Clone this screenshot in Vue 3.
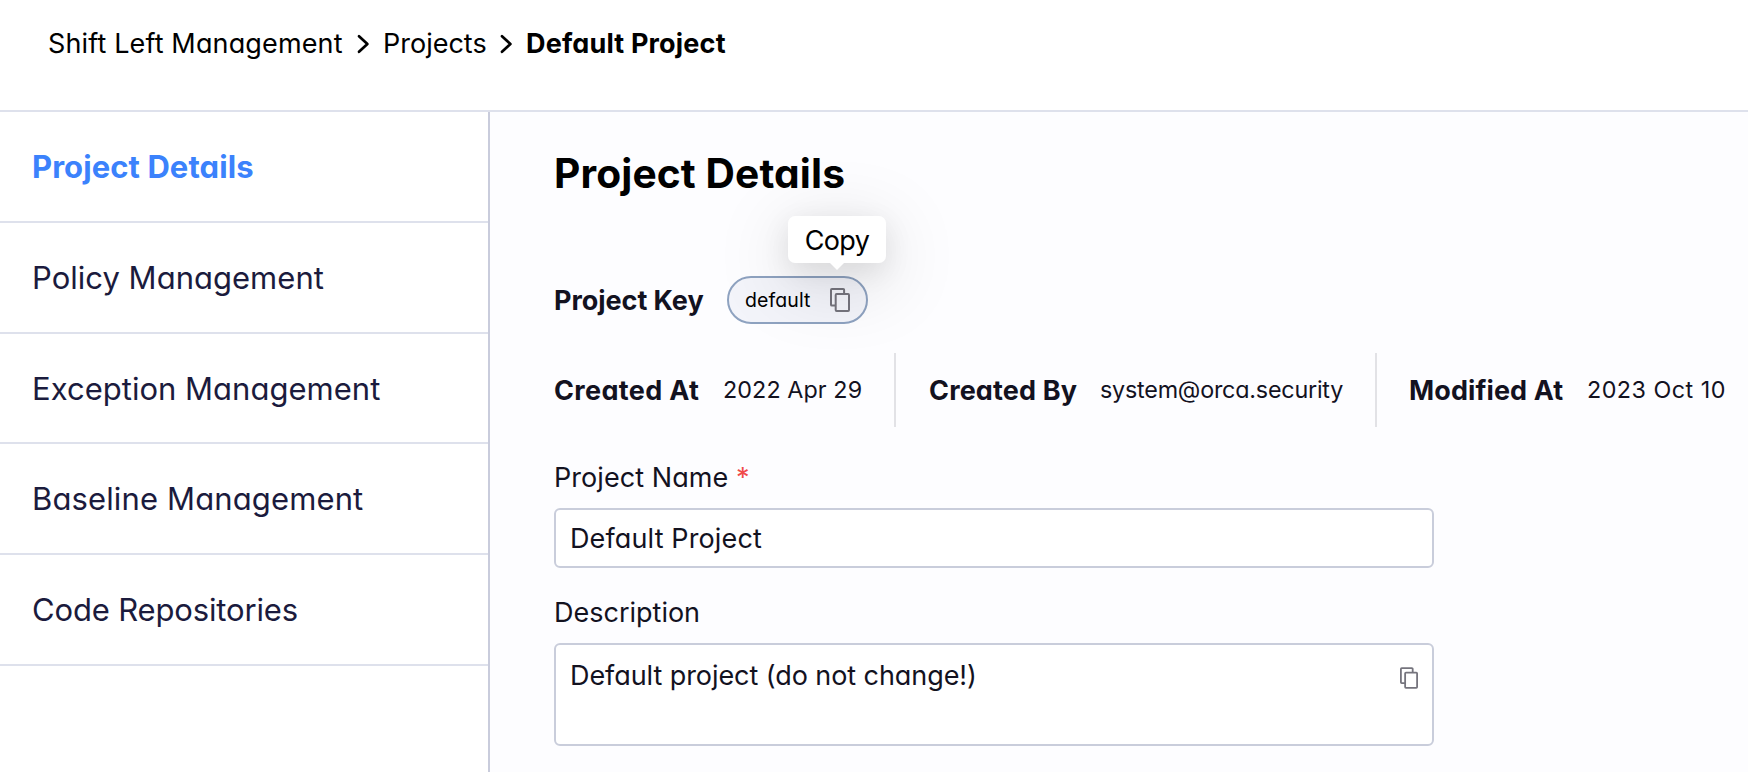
<script setup>
const navItems = [
  { label: 'Project Details', cls: 'active' },
  { label: 'Policy Management', cls: 'policy' },
  { label: 'Exception Management', cls: 'exception' },
  { label: 'Baseline Management', cls: 'baseline' },
  { label: 'Code Repositories', cls: 'code' },
]
const meta = [
  { label: 'Created At', value: '2022 Apr 29', cls: 'created-at' },
  { label: 'Created By', value: 'system@orca.security', cls: 'created-by' },
  { label: 'Modified At', value: '2023 Oct 10', cls: 'modified-at' },
]
</script>

<template>
  <div class="page">
    <header class="header">
      <nav class="crumbs">
        <span class="crumb root">Shift Left Management</span>
        <svg class="chevron" width="13" height="20" viewBox="0 0 13 20"><path d="M2 2.2 10.4 10 2 17.8" /></svg>
        <span class="crumb mid">Projects</span>
        <svg class="chevron" width="13" height="20" viewBox="0 0 13 20"><path d="M2 2.2 10.4 10 2 17.8" /></svg>
        <span class="crumb current">Default Project</span>
      </nav>
    </header>

    <div class="body">
      <aside class="sidebar">
        <a v-for="item in navItems" :key="item.label" class="nav-item" :class="item.cls">{{ item.label }}</a>
      </aside>

      <main class="main">
        <h1 class="title">Project Details</h1>

        <div class="key-row">
          <span class="label key-label">Project Key</span>
          <span class="pill">
            <span class="pill-text">default</span>
            <span class="copy-wrap">
              <svg class="copy" width="20" height="24" viewBox="0 0 20 24">
                <path d="M5.5 17.6H1.9a.9.9 0 0 1-.9-.9V1.9a.9.9 0 0 1 .9-.9H13.2a.9.9 0 0 1 .9.9V6" />
                <rect x="5.7" y="6" width="13.3" height="17" rx=".9" />
              </svg>
              <span class="tooltip">Copy</span>
            </span>
          </span>
        </div>

        <div class="meta">
          <div v-for="m in meta" :key="m.label" class="meta-cell" :class="m.cls">
            <span class="label">{{ m.label }}</span>
            <span class="value">{{ m.value }}</span>
          </div>
        </div>

        <div class="field-label name-label">Project Name <span class="required">*</span></div>
        <div class="input">Default Project</div>

        <div class="field-label desc-label">Description</div>
        <div class="textarea">
          <span class="desc-text">Default project (do not change!)</span>
          <svg class="copy" width="18" height="22" viewBox="0 0 20 24">
            <path d="M5.5 17.6H1.9a.9.9 0 0 1-.9-.9V1.9a.9.9 0 0 1 .9-.9H13.2a.9.9 0 0 1 .9.9V6" />
            <rect x="5.7" y="6" width="13.3" height="17" rx=".9" />
          </svg>
        </div>
      </main>
    </div>
  </div>
</template>

<style>
body {
  margin: 0;
  background: #fff;
}
</style>

<style scoped>
.page {
  box-sizing: border-box;
  height: 772px;
  overflow: hidden;
  display: flex;
  flex-direction: column;
  font-family: Inter, "Liberation Sans", sans-serif;
  font-feature-settings: "cv11";
  font-size: 27px;
  font-weight: 380;
  color: #13121f;
  white-space: nowrap;
}
.header {
  box-sizing: border-box;
  flex: none;
  height: 112px;
  padding: 23px 0 0 48px;
  border-bottom: 2px solid #dee1ec;
  background: #fff;
  color: #000;
}
.crumbs {
  display: flex;
  align-items: center;
  line-height: 40px;
}
.crumb { padding-top: 1px; }
.root { width: 309px; letter-spacing: 0.14px; }
.mid { width: 117px; margin-left: 13px; }
.current { margin-left: 13px; font-weight: 700; letter-spacing: 0.17px; }
.chevron {
  fill: none;
  stroke: #000;
  stroke-width: 2.7;
  stroke-linecap: round;
  stroke-linejoin: round;
}
.body {
  flex: 1;
  display: flex;
  min-height: 0;
}
.sidebar {
  box-sizing: border-box;
  flex: none;
  width: 490px;
  border-right: 2px solid #c9ccdc;
  background: #fff;
}
.nav-item {
  box-sizing: border-box;
  display: flex;
  align-items: center;
  height: 110.75px;
  padding-left: 32px;
  border-bottom: 2px solid #dee1ec;
  font-size: 31px;
  color: #1b1b3d;
  letter-spacing: 0.02px;
}
.nav-item.active { font-weight: 700; color: #3b82fc; letter-spacing: 0.08px; }
.nav-item.exception { padding-top: 1px; }
.nav-item.baseline { letter-spacing: 0.13px; }
.nav-item.code { letter-spacing: -0.15px; }
.main {
  flex: 1;
  padding: 37px 0 0 64px;
  background: #fdfdff;
}
.title {
  margin: 0;
  font-size: 40.7px;
  line-height: 50px;
  font-weight: 700;
  color: #000;
  letter-spacing: 0.12px;
}
.label { font-weight: 700; }
.key-row {
  display: flex;
  align-items: center;
  height: 48px;
  margin-top: 77px;
}
.key-label { width: 173px; letter-spacing: -0.05px; }
.pill {
  box-sizing: border-box;
  display: flex;
  align-items: center;
  justify-content: space-between;
  width: 141px;
  height: 48px;
  padding: 0 16px;
  border: 2px solid #8ea2c0;
  border-radius: 24px;
  background: #f3f4fa;
}
.pill-text { font-size: 19.5px; color: #000; letter-spacing: 0.1px; }
.copy-wrap { position: relative; display: flex; }
.copy {
  flex: none;
  fill: none;
  stroke: #75747d;
  stroke-width: 2;
}
.tooltip {
  position: absolute;
  left: -42px;
  bottom: 49px;
  width: 98px;
  height: 47px;
  border-radius: 7px;
  background: #fff;
  box-shadow: 0 16px 76px rgba(0, 0, 0, 0.17), 0 8px 28px rgba(0, 0, 0, 0.09);
  line-height: 50px;
  text-align: center;
  color: #000;
  letter-spacing: -0.7px;
}
.tooltip::after {
  content: "";
  position: absolute;
  left: 42px;
  top: 47px;
  border: 7px solid transparent;
  border-top-color: #fff;
  border-bottom: 0;
}
.meta {
  display: flex;
  height: 74px;
  margin-top: 29px;
}
.meta-cell {
  box-sizing: border-box;
  display: flex;
  align-items: center;
}
.meta-cell + .meta-cell {
  padding-left: 32px;
  border-left: 2px solid #e2e2e6;
}
.value { font-size: 23.3px; padding-bottom: 2px; }
.created-at { width: 340px; }
.created-at .label { width: 169px; letter-spacing: 0.34px; }
.created-at .value { letter-spacing: 0.09px; }
.created-by { width: 481px; }
.created-by .label { width: 172px; padding-left: 1px; margin-right: -1px; letter-spacing: 0.16px; }
.created-by .value { letter-spacing: -0.2px; }
.modified-at .label { width: 178px; letter-spacing: 0.1px; }
.modified-at .value { letter-spacing: 0.48px; }
.field-label { line-height: 36px; margin-bottom: 12px; }
.name-label { margin-top: 33px; letter-spacing: 0.06px; }
.desc-label { margin-top: 27px; }
.required { color: #f04a4a; }
.input,
.textarea {
  box-sizing: border-box;
  display: flex;
  width: 880px;
  border: 2px solid #c9cddb;
  border-radius: 6px;
  background: #fff;
  padding-left: 14px;
}
.input { height: 60px; align-items: center; letter-spacing: 0.13px; }
.textarea {
  height: 103px;
  padding-top: 13px;
  padding-right: 14px;
  justify-content: space-between;
  line-height: 36px;
}
.desc-text { letter-spacing: -0.07px; }
.textarea .copy { margin-top: 9px; }
</style>
